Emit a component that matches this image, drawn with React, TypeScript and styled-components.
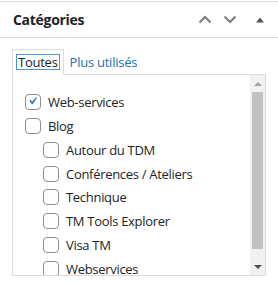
import React from "react";
import styled, { createGlobalStyle } from "styled-components";

const Global = createGlobalStyle`
  html, body { margin: 0; padding: 0; background: #fff; }
  body { font-family: "Open Sans", "Noto Sans", sans-serif; font-size: 13px; color: #1d2327; }
`;

const Box = styled.div`
  width: 278px;
  padding-top: 1px;
  background: #fff;
`;

const Header = styled.div`
  display: flex;
  align-items: center;
  height: 35px;
  border-top: 1px solid #dcdcde;
  border-bottom: 1px solid #dcdcde;
  padding-left: 13px;
`;

const Title = styled.h2`
  flex: 1;
  margin: 0;
  font-size: 14px;
  font-weight: 700;
  letter-spacing: -0.3px;
  color: #1d2327;
`;

const HeaderButton = styled.button<{ $w: number }>`
  width: ${(p) => p.$w}px;
  height: 35px;
  padding: 0;
  border: 0;
  background: none;
  display: flex;
  align-items: center;
  justify-content: center;
`;

const Inside = styled.div`
  padding: 11px 12px 0 12px;
`;

const Tabs = styled.ul`
  display: flex;
  align-items: flex-end;
  margin: 0;
  padding: 0;
  list-style: none;
  position: relative;
  z-index: 1;
  margin-bottom: -1px;
`;

const Tab = styled.li<{ $active?: boolean }>`
  height: 24px;
  display: flex;
  align-items: center;
  padding: 0 4px;
  border: 1px solid ${(p) => (p.$active ? "#dcdcde" : "transparent")};
  border-bottom: 1px solid ${(p) => (p.$active ? "#fff" : "transparent")};
  background: ${(p) => (p.$active ? "#fff" : "transparent")};
  color: ${(p) => (p.$active ? "#1d2327" : "#2271b1")};
  font-size: 13px;
`;

const TabLabel = styled.span<{ $focus?: boolean }>`
  padding: 0 1px;
  line-height: 14px;
  letter-spacing: -0.25px;
  box-shadow: ${(p) => (p.$focus ? "0 0 0 1px #4f94d4" : "none")};
`;

const Panel = styled.div`
  height: 200px;
  display: flex;
  border: 1px solid #dcdcde;
  background: #fff;
  overflow: hidden;
`;

const PanelContent = styled.div`
  flex: 1;
  min-width: 0;
  overflow: hidden;
  padding: 0 12px;
`;

const Scrollbar = styled.div`
  width: 15px;
  flex: none;
  display: flex;
  flex-direction: column;
  background: #f1f1f1;
`;

const ScrollButton = styled.div`
  height: 17px;
  flex: none;
  display: flex;
  align-items: center;
  justify-content: center;
`;

const Track = styled.div`
  flex: 1;
  display: flex;
  flex-direction: column;
  padding: 0 2px;
`;

const Thumb = styled.div`
  height: 157px;
  background: #c1c1c1;
`;

const List = styled.ul<{ $nested?: boolean }>`
  list-style: none;
  margin: 0;
  padding: ${(p) => (p.$nested ? "0 0 0 18px" : "15px 0 12px 0")};
`;

const Item = styled.li`
  margin: 0;
`;

const Row = styled.label`
  display: flex;
  align-items: center;
  height: 23.86px;
  font-size: 13px;
  letter-spacing: -0.3px;
  color: #1d2327;
  white-space: nowrap;
`;

const Check = styled.span`
  width: 16px;
  height: 16px;
  box-sizing: border-box;
  border: 1px solid #8c8f94;
  border-radius: 4px;
  margin-right: 7px;
  flex: none;
  display: flex;
  align-items: center;
  justify-content: center;
  background: #fff;
`;

type Cat = { name: string; checked?: boolean; children?: Cat[] };

const cats: Cat[] = [
  { name: "Web-services", checked: true },
  {
    name: "Blog",
    children: [
      { name: "Autour du TDM" },
      { name: "Conférences / Ateliers" },
      { name: "Technique" },
      { name: "TM Tools Explorer" },
      { name: "Visa TM" },
      { name: "Webservices" },
    ],
  },
];

function CatItem({ c }: { c: Cat }) {
  return (
    <Item>
      <Row>
        <Check>
          {c.checked && (
            <svg width="20" height="20" viewBox="0 0 20 20" style={{ margin: "-2px 0 0 -1px" }}>
              <path d="M14.83 4.89l1.34.94-5.81 8.38H9.02L5.78 9.67l1.34-1.25 2.57 2.4z" fill="#3582c4" />
            </svg>
          )}
        </Check>
        {c.name}
      </Row>
      {c.children && (
        <List $nested>
          {c.children.map((k) => (
            <CatItem key={k.name} c={k} />
          ))}
        </List>
      )}
    </Item>
  );
}

export default function App() {
  return (
    <Box>
      <Global />
      <Header>
        <Title>Catégories</Title>
        <HeaderButton $w={25}>
          <svg width="14" height="9" viewBox="0 0 14 9">
            <path d="M1.5 7.5L7 2l5.5 5.5" fill="none" stroke="#787c82" strokeWidth="2" />
          </svg>
        </HeaderButton>
        <HeaderButton $w={25}>
          <svg width="14" height="9" viewBox="0 0 14 9">
            <path d="M1.5 1.5L7 7l5.5-5.5" fill="none" stroke="#787c82" strokeWidth="2" />
          </svg>
        </HeaderButton>
        <HeaderButton $w={36}>
          <svg width="8" height="6" viewBox="0 0 8 6">
            <path d="M0 5.5L4 0.5l4 5z" fill="#50575e" />
          </svg>
        </HeaderButton>
      </Header>
      <Inside>
        <Tabs>
          <Tab $active>
            <TabLabel $focus>Toutes</TabLabel>
          </Tab>
          <Tab>
            <TabLabel>Plus utilisés</TabLabel>
          </Tab>
        </Tabs>
        <Panel>
          <PanelContent>
            <List>
              {cats.map((c) => (
                <CatItem key={c.name} c={c} />
              ))}
            </List>
          </PanelContent>
          <Scrollbar>
            <ScrollButton>
              <svg width="8" height="4" viewBox="0 0 8 4">
                <path d="M0 4L4 0l4 4z" fill="#a3a3a3" />
              </svg>
            </ScrollButton>
            <Track>
              <Thumb />
            </Track>
            <ScrollButton>
              <svg width="8" height="4" viewBox="0 0 8 4">
                <path d="M0 0h8L4 4z" fill="#505050" />
              </svg>
            </ScrollButton>
          </Scrollbar>
        </Panel>
      </Inside>
    </Box>
  );
}
